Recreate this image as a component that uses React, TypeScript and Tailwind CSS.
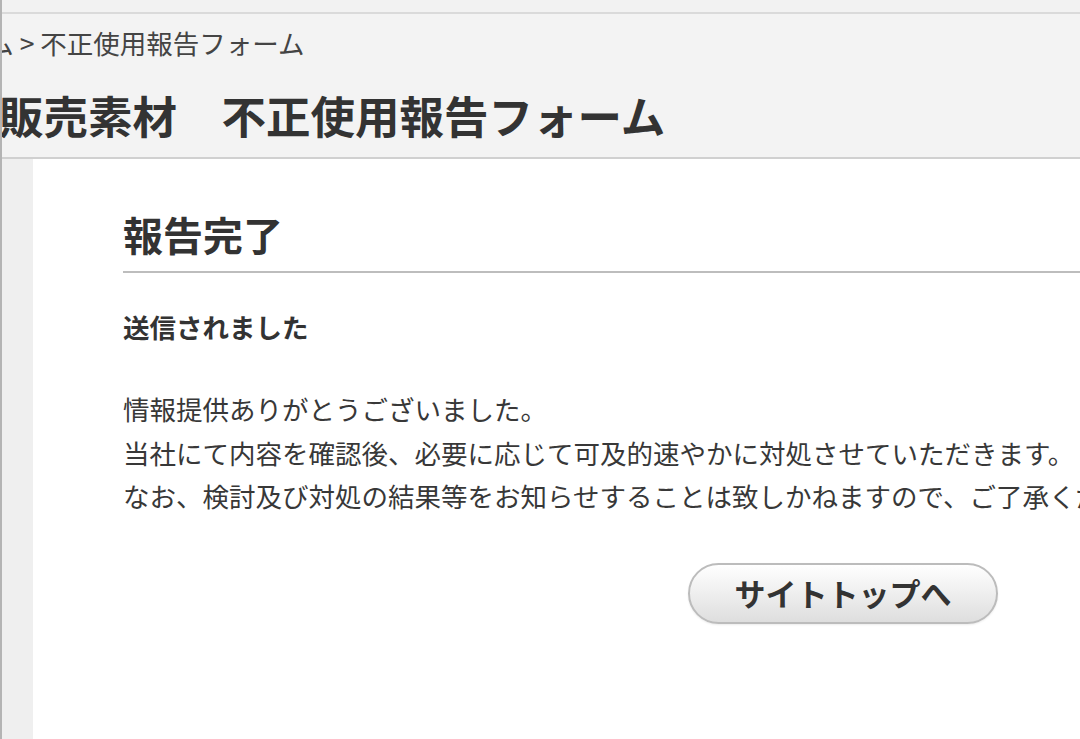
export default function App() {
  return (
    <div
      className="w-[1080px] h-[739px] overflow-hidden bg-[#f2f2f2] text-[#333] border-l-2 border-[#b4b4b4] flex flex-col"
      style={{ fontFamily: '"Noto Sans CJK JP", "Noto Sans", sans-serif' }}
    >
      {/* top strip */}
      <div className="h-[14px] shrink-0 bg-[#f2f2f2] border-b-2 border-[#dadada]" />

      {/* header: breadcrumb + title */}
      <div className="h-[145px] shrink-0 bg-[#f3f3f3] border-b-2 border-[#d0d0d0] pt-[11px] whitespace-nowrap">
        <div className="text-[26.5px] leading-[36px] text-[#444] ml-[-67px]">
          ホーム &gt; 不正使用報告フォーム
        </div>
        <h1 className="mt-[26px] text-[44.5px] leading-[56px] font-bold text-[#333] ml-[-3px]">
          販売素材　不正使用報告フォーム
        </h1>
      </div>

      {/* body */}
      <div className="flex flex-1 min-h-0">
        <div className="w-[31px] shrink-0 bg-[#efefef]" />
        <div className="flex-1 bg-white pl-[90px] pt-[49px] whitespace-nowrap overflow-hidden">
          <h2 className="text-[40px] leading-[52px] font-bold pb-[11px] border-b-2 border-[#bdbdbd] mr-[-40px]">
            報告完了
          </h2>
          <p className="mt-[36px] text-[26.5px] leading-[36px] font-bold">送信されました</p>
          <div className="mt-[42px] text-[26.5px] leading-[43.5px] text-[#383838]">
            <p>情報提供ありがとうございました。</p>
            <p>当社にて内容を確認後、必要に応じて可及的速やかに対処させていただきます。</p>
            <p>なお、検討及び対処の結果等をお知らせすることは致しかねますので、ご了承ください。</p>
          </div>
          <div className="mt-[45px] ml-[565px]">
            <button className="w-[310px] h-[61px] rounded-full border-2 border-[#bcbcbc] bg-gradient-to-b from-[#ffffff] to-[#dedede] text-[31px] font-bold text-[#333] shadow-[0_1px_2px_rgba(0,0,0,0.08)]">
              サイトトップへ
            </button>
          </div>
        </div>
      </div>
    </div>
  );
}
